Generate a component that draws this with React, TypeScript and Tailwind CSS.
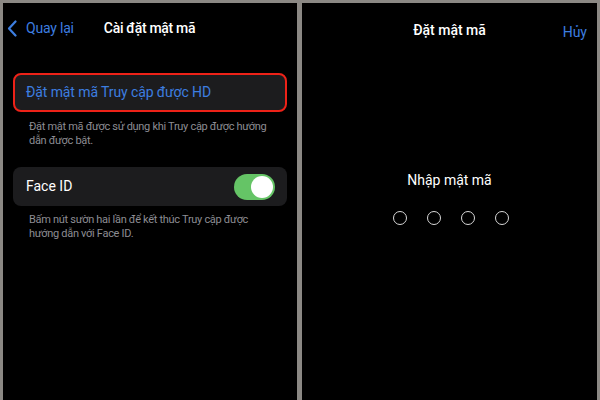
function Chevron() {
  return (
    <svg width="10" height="17" viewBox="0 0 10 17" fill="none">
      <path d="M8.5 1.5L2 8.5l6.5 7" stroke="#3d7ee0" strokeWidth="2.2" strokeLinecap="round" strokeLinejoin="round" />
    </svg>
  );
}

function Toggle() {
  return (
    <div className="flex h-[26px] w-[41px] items-center justify-end rounded-full bg-[#65c466] p-[2px]">
      <div className="h-[22px] w-[22px] rounded-full bg-white" />
    </div>
  );
}

function SettingsPanel() {
  return (
    <div className="flex w-[294px] shrink-0 flex-col bg-black">
      <div className="flex h-[50px] items-center">
        <div className="flex items-center gap-[9px] pl-[4px] text-[14px] tracking-[-0.2px] text-[#3d7ee0]">
          <Chevron />
          <span>Quay lại</span>
        </div>
        <span className="ml-[30px] text-[14px] font-medium tracking-[-0.3px] text-white">Cài đặt mật mã</span>
      </div>

      <div className="mx-[10px] mt-[20px] flex h-[39px] items-center rounded-[8px] border-2 border-[#ee2218] bg-[#1c1c1e] px-[11px] text-[14px] tracking-[-0.1px] text-[#3d7ee0]">
        Đặt mật mã Truy cập được HD
      </div>
      <p className="mx-[26px] mt-[8px] whitespace-nowrap text-[11px] leading-[14px] tracking-[-0.3px] text-[#8d8d93]">
        Đặt mật mã được sử dụng khi Truy cập được hướng
        <br />
        dẫn được bật.
      </p>

      <div className="mx-[10px] mt-[19px] flex h-[39px] items-center justify-between rounded-[8px] bg-[#1c1c1e] pl-[13px] pr-[12px]">
        <span className="text-[14px] text-white">Face ID</span>
        <Toggle />
      </div>
      <p className="mx-[26px] mt-[7px] whitespace-nowrap text-[11px] leading-[14px] tracking-[-0.3px] text-[#8d8d93]">
        Bấm nút sườn hai lần để kết thúc Truy cập được
        <br />
        hướng dẫn với Face ID.
      </p>
    </div>
  );
}

function PasscodePanel() {
  return (
    <div className="flex w-[295px] shrink-0 flex-col bg-black">
      <div className="relative flex h-[54px] items-center justify-center">
        <span className="text-[14px] font-medium text-white">Đặt mật mã</span>
        <span className="absolute right-[10px] top-[19px] text-[14px] text-[#3d7ee0]">Hủy</span>
      </div>
      <div className="mt-[113px] flex flex-col items-center">
        <span className="text-[14px] text-white">Nhập mật mã</span>
        <div className="ml-[3px] mt-[20px] flex gap-[20px]">
          {[0, 1, 2, 3].map((i) => (
            <div key={i} className="h-[14px] w-[14px] rounded-full border-[1.5px] border-[#d8d8d8]" />
          ))}
        </div>
      </div>
    </div>
  );
}

export default function App() {
  return (
    <div
      className="flex h-[400px] w-[600px] gap-[5px] overflow-hidden bg-[#8b8884] pl-[3px] pr-[3px] pt-[3px]"
      style={{ fontFamily: 'Roboto, "Noto Sans", sans-serif' }}
    >
      <SettingsPanel />
      <PasscodePanel />
    </div>
  );
}
